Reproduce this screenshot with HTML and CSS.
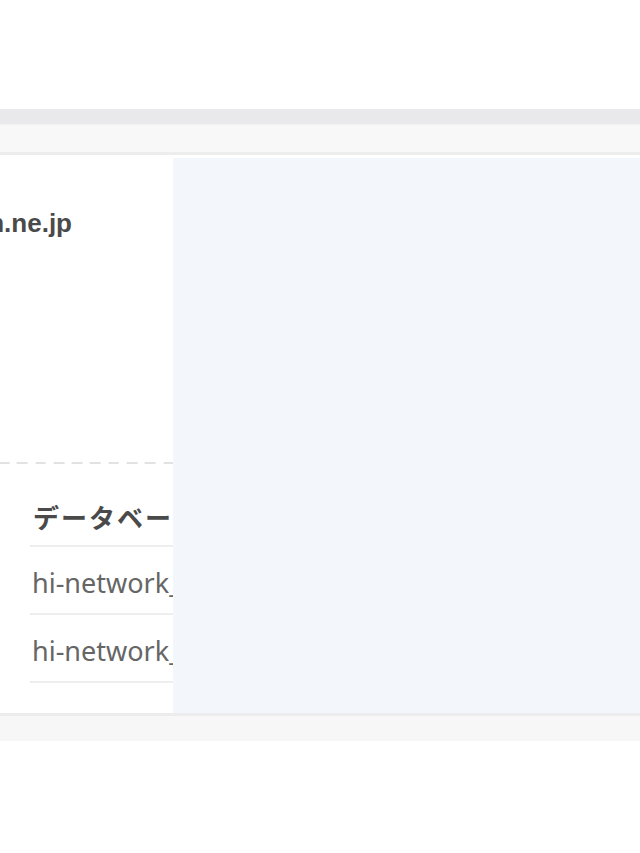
FILE: index.html
```html
<!DOCTYPE html>
<html lang="ja">
<head>
<meta charset="utf-8">
<title>DB</title>
<link rel="stylesheet" href="styles.css">
</head>
<body>
<div class="page">
  <div class="topbar"></div>
  <div class="header"></div>
  <div class="main">
    <div class="left">
      <div class="domain-wrap"><div class="domain">hi-network.ocn.ne.jp</div></div>
      <div class="dashed"></div>
      <div class="db">
        <div class="db-head">データベース名</div>
        <div class="db-row">hi-network_db01</div>
        <div class="db-row">hi-network_db02</div>
      </div>
    </div>
    <div class="panel"></div>
  </div>
  <div class="footer"></div>
</div>
</body>
</html>
```

FILE: styles.css
```css
html, body {
  margin: 0;
  padding: 0;
  background: #ffffff;
}
body {
  width: 640px;
  height: 853px;
  overflow: hidden;
  font-family: "Noto Sans", "Noto Sans CJK JP", sans-serif;
}
.page {
  padding-top: 109px;
}
.topbar {
  height: 15px;
  background: #e9e9eb;
}
.header {
  height: 27px;
  background: #f8f8f8;
  border-top: 1px solid #f1f1f2;
  border-bottom: 3px solid #ededed;
}
.main {
  display: flex;
  height: 558px;
}
.left {
  width: 173px;
  flex: none;
  overflow: hidden;
  background: #ffffff;
}
.domain-wrap {
  width: 72px;
  display: flex;
  justify-content: flex-end;
  margin-top: 53px;
}
.domain {
  white-space: nowrap;
  font-family: "Liberation Sans", Arial, sans-serif;
  font-weight: bold;
  font-size: 26px;
  line-height: 30px;
  color: #4a4a4a;
}
.dashed {
  margin-top: 224px;
  height: 2px;
  width: 173px;
  background-image: repeating-linear-gradient(to right, #e2e2e2 0 10.7px, transparent 10.7px 18.3px);
  background-position: -1.4px 0;
}
.db {
  margin-left: 30px;
  width: 300px;
  margin-top: 35px;
}
.db-head {
  font-family: "Noto Sans CJK JP", sans-serif;
  font-weight: bold;
  font-size: 26px;
  line-height: 36px;
  color: #4a4a4a;
  padding: 0 0 10px 3px;
  border-bottom: 2px solid #eeeeee;
  white-space: nowrap;
  letter-spacing: 2px;
}
.db-row {
  font-size: 27px;
  line-height: 36px;
  color: #666666;
  padding: 18px 0 12px 2px;
  border-bottom: 2px solid #eeeeee;
  white-space: nowrap;
}
.panel {
  flex: 1;
  margin-top: 3px;
  background: #f3f6fa;
}
.footer {
  height: 25px;
  background: #f7f7f7;
  border-top: 3px solid #ececec;
}
```
